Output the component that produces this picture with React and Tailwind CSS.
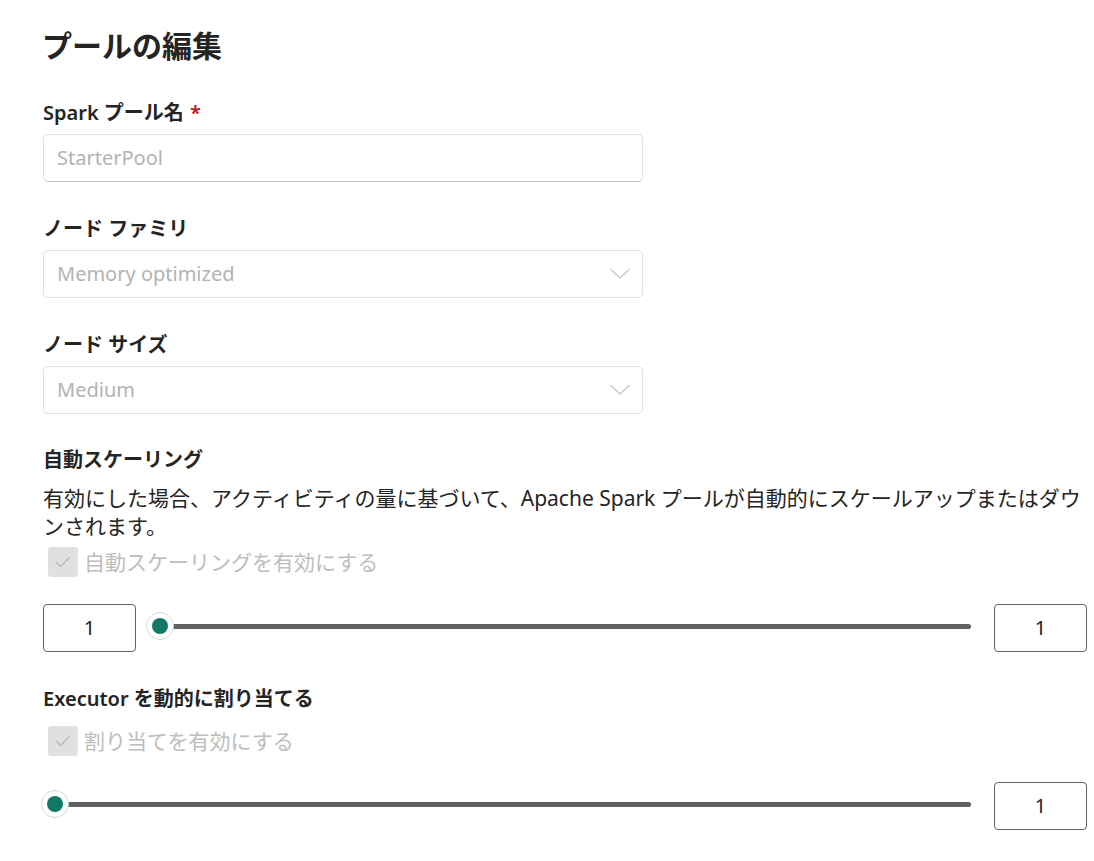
function Label({ children, required }) {
  return (
    <div className="h-[26px] leading-[26px] text-[20px] font-semibold text-[#242424]">
      {children}
      {required && <span className="ml-[6px] text-[#c50f1f]">*</span>}
    </div>
  );
}

function Chevron() {
  return (
    <svg width="20" height="12" viewBox="0 0 20 12" fill="none">
      <path d="M1 1.5 L10 10 L19 1.5" stroke="#c8c8c8" strokeWidth="1.4" strokeLinecap="round" strokeLinejoin="round" />
    </svg>
  );
}

function SelectBox({ value }) {
  return (
    <div className="mt-2 flex h-[48px] w-[600px] items-center justify-between rounded-[5px] border border-[#e0e0e0] bg-white pl-[13px] pr-[12px]">
      <span className="text-[20px] text-[#b3b3b3]">{value}</span>
      <Chevron />
    </div>
  );
}

function Checkbox({ label }) {
  return (
    <div className="flex h-[30px] items-center">
      <div className="ml-[5px] flex h-[30px] w-[30px] items-center justify-center rounded-[3px] bg-[#e0e0e0]">
        <svg width="16" height="12" viewBox="0 0 16 12" fill="none">
          <path d="M1.5 6.5 L5.5 10.5 L14.5 1.5" stroke="#b8b8b8" strokeWidth="1.3" strokeLinecap="round" strokeLinejoin="round" />
        </svg>
      </div>
      <span className="ml-[6px] text-[21px] leading-[30px] text-[#bdbdbd]">{label}</span>
    </div>
  );
}

function NumberBox() {
  return (
    <div className="flex h-[48px] w-[93px] shrink-0 items-center justify-center rounded-[4px] border border-[#616161] bg-white text-[20px] text-[#242424]">
      1
    </div>
  );
}

function Slider() {
  return (
    <div className="relative h-[28px] flex-1">
      <div className="absolute left-[14px] right-0 top-[12px] h-[5px] rounded-full bg-[#616161]" />
      <div className="absolute left-0 top-0 flex h-[28px] w-[28px] items-center justify-center rounded-full border border-[#c9e0d8] bg-white">
        <div className="h-[16px] w-[16px] rounded-full bg-[#117865]" />
      </div>
    </div>
  );
}

export default function App() {
  return (
    <div
      className="min-h-[861px] w-[1094px] bg-white pl-[43px] pt-[26px] text-[#242424]"
      style={{ fontFamily: '"Noto Sans", "Noto Sans CJK JP", sans-serif' }}
    >
      <h1 className="h-[40px] text-[30px] font-bold leading-[40px] -ml-[1px]">プールの編集</h1>

      <div className="mt-[34px]">
        <Label required>Spark プール名</Label>
        <div className="mt-2 flex h-[48px] w-[600px] items-center rounded-[5px] border border-[#e0e0e0] border-b-[#bdbdbd] bg-white pl-[13px]">
          <span className="text-[20px] text-[#b3b3b3]">StarterPool</span>
        </div>
      </div>

      <div className="mt-[34px]">
        <Label>ノード ファミリ</Label>
        <SelectBox value="Memory optimized" />
      </div>

      <div className="mt-[34px]">
        <Label>ノード サイズ</Label>
        <SelectBox value="Medium" />
      </div>

      <div className="mt-[33px] w-[1044px]">
        <Label>自動スケーリング</Label>
        <p className="mt-[11px] text-[21px] leading-[28px] text-[#242424]">
          <span className="whitespace-nowrap">有効にした場合、アクティビティの量に基づいて、Apache Spark プールが自動的にスケールアップまたはダウ</span>
          <br />
          ンされます。
        </p>
        <div className="mt-[7px]">
          <Checkbox label="自動スケーリングを有効にする" />
        </div>
        <div className="mt-[27px] flex items-center">
          <NumberBox />
          <div className="ml-[10px] mr-[23px] flex flex-1 items-center -mt-[5px]">
            <Slider />
          </div>
          <NumberBox />
        </div>
      </div>

      <div className="mt-[34px] w-[1044px]">
        <Label>Executor を動的に割り当てる</Label>
        <div className="mt-[14px]">
          <Checkbox label="割り当てを有効にする" />
        </div>
        <div className="mt-[26px] flex items-center">
          <div className="-ml-[2px] mr-[23px] flex flex-1 items-center -mt-[5px]">
            <Slider />
          </div>
          <NumberBox />
        </div>
      </div>
    </div>
  );
}
